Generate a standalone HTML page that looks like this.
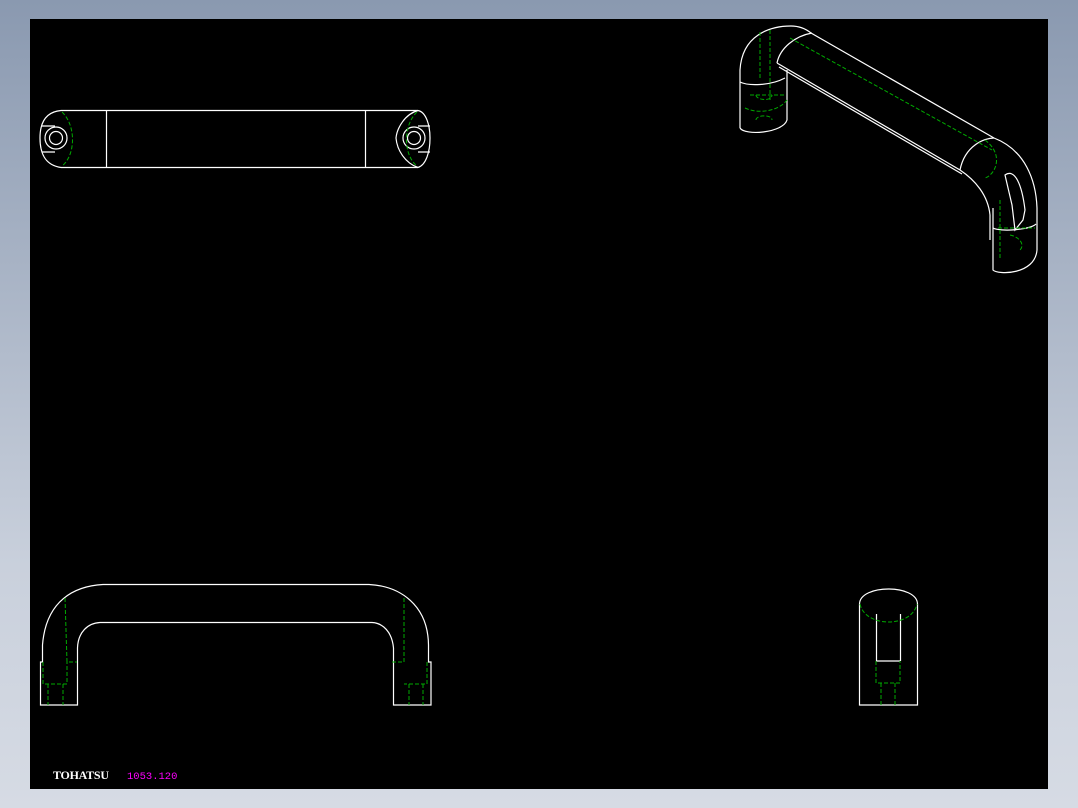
<!DOCTYPE html>
<html><head><meta charset="utf-8"><style>
html,body{margin:0;padding:0}
body{width:1078px;height:808px;overflow:hidden;background:linear-gradient(#8a99b0,#c9d0dc 70%,#d6dbe4);position:relative}
#c{position:absolute;left:30px;top:19px;width:1018px;height:770px;background:#000}
svg{position:absolute;left:0;top:0}
</style></head><body>
<div id="c"></div>
<svg width="1078" height="808" viewBox="0 0 1078 808" fill="none" stroke-width="1.2">
<g stroke="#fff">
<path d="M61 110.5H418M61 167.5H418M106.5 110V168M365.5 110V168"/>
<path d="M61 110.5C44 112 40 125 40 138C40 152 44 165 61 167.5"/>
<path d="M418 110.5C426 112 430 125 430 138C430 152 426 165 418 167.5"/>
<path d="M42 126H55M42 152H55M418 126H430M418 152H430"/>
<path d="M418 110.5C405 114 397 128 396 138C397 150 405 163 418 167.5"/>
<circle cx="56" cy="138" r="11"/><circle cx="56" cy="138" r="6.5"/>
<circle cx="414" cy="138" r="11"/><circle cx="414" cy="138" r="6.5"/>
<path d="M40.5 705V662H42.5V645C46 600 75 586 103 584.5H369C400 586 428 605 428.5 645V662H431V705H393.5V648C392 632 383 623 372 622.5H100C88 623 78 632 77.5 648V705Z"/>
<path d="M859.5 705V604C860 584 917 584 917.5 604V705ZM876.5 614V661M900.5 614V661M876 661H900"/>
<path d="M740 128V70C742 35 770 26 791 26C800 26 806 29 811 33L994 138C1025 150 1036 180 1037 208V250C1035 275 998 275 993 270V208"/>
<path d="M740 128C745 136 783 133 787 120V70"/>
<path d="M740 82C748 86 770 86 785 78"/>
<path d="M777 63L960 170M779 67L962 174"/>
<path d="M777 63C780 48 795 36 812 33"/>
<path d="M960 170C965 145 985 138 994 138"/>
<path d="M960 170C975 180 988 195 990 215V240"/>
<path d="M1005 175C1015 168 1022 185 1025 210L1023 220L1015 230L1012 205Z"/>
<path d="M993 228C1000 232 1030 230 1036 224"/>
</g>
<g stroke="#0a0" stroke-dasharray="4 2" stroke-width="1">
<path d="M62 112C76 125 76 155 62 166"/>
<path d="M417 112C403 125 403 155 417 166"/>
<path d="M65 598L67 662H77M43 662V684H67V662M48 684V705M63 684V705"/>
<path d="M404 598L404 662H392M427 662V684H404M409 684V705M423 684V705"/>
<path d="M860 604C865 628 912 628 917 604M876 661V683H900V661M881 683V705M895 683V705"/>
<path d="M760 32V80M770 30V100M745 108C760 115 780 110 787 100M750 95H785M756 95C756 100 772 102 772 95M756 120C756 115 772 114 772 120"/>
<path d="M790 38L992 150M985 140C1005 155 995 175 985 178"/>
<path d="M1000 200V260M1010 235C1020 237 1025 245 1020 250M998 228H1035"/>
</g>
<text x="53" y="779" fill="#fff" font-family="Liberation Serif,serif" font-weight="bold" font-size="12" textLength="56">TOHATSU</text>
<text x="127" y="779" fill="#f0f" font-family="Liberation Mono,monospace" font-size="10.5">1053.120</text>
</svg>
</body></html>
